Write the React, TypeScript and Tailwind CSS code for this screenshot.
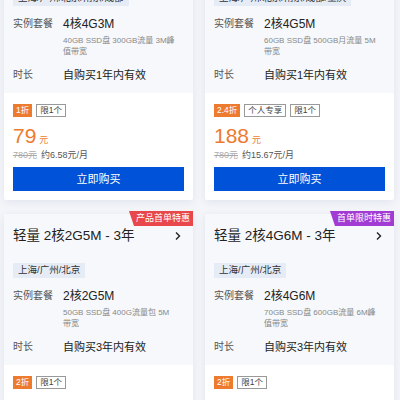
import React from 'react'

type Plan = {
  title: string
  ribbon?: { text: string; color: string }
  region: string
  spec: string
  detail: string
  duration: string
  badges: { text: string; hot?: boolean }[]
  price: string
  oldPrice: string
  monthly: string
}

const plans: Plan[] = [
  {
    title: '轻量 4核4G3M - 1年',
    region: '上海/广州/北京/南京/成都',
    spec: '4核4G3M',
    detail: '40GB SSD盘 300GB流量 3M峰值带宽',
    duration: '自购买1年内有效',
    badges: [{ text: '1折', hot: true }, { text: '限1个' }],
    price: '79',
    oldPrice: '780元',
    monthly: '约6.58元/月',
  },
  {
    title: '轻量 2核4G5M - 1年',
    region: '上海/广州/北京/南京/成都/重庆',
    spec: '2核4G5M',
    detail: '60GB SSD盘 500GB月流量 5M 带宽',
    duration: '自购买1年内有效',
    badges: [{ text: '2.4折', hot: true }, { text: '个人专享' }, { text: '限1个' }],
    price: '188',
    oldPrice: '780元',
    monthly: '约15.67元/月',
  },
  {
    title: '轻量 2核2G5M - 3年',
    ribbon: { text: '产品首单特惠', color: 'bg-[#e8474b]' },
    region: '上海/广州/北京',
    spec: '2核2G5M',
    detail: '50GB SSD盘 400G流量包 5M 带宽',
    duration: '自购买3年内有效',
    badges: [{ text: '2折', hot: true }, { text: '限1个' }],
    price: '198',
    oldPrice: '2160元',
    monthly: '约5.5元/月',
  },
  {
    title: '轻量 2核4G6M - 3年',
    ribbon: { text: '首单限时特惠', color: 'bg-[#a23bd4]' },
    region: '上海/广州/北京',
    spec: '2核4G6M',
    detail: '70GB SSD盘 600GB流量 6M峰值带宽',
    duration: '自购买3年内有效',
    badges: [{ text: '2折', hot: true }, { text: '限1个' }],
    price: '528',
    oldPrice: '2880元',
    monthly: '约14.67元/月',
  },
]

function Card({ plan }: { plan: Plan }) {
  return (
    <div className="relative flex flex-col rounded-[2px] bg-white shadow-[0_2px_8px_rgba(0,40,100,0.08)]">
      {plan.ribbon && (
        <div
          className={`absolute top-[-3px] right-0 h-[15px] pl-[7px] pr-[3px] flex items-center text-[9px] leading-none text-white ${plan.ribbon.color} [clip-path:polygon(0_0,100%_0,100%_100%,5px_100%)]`}
        >
          {plan.ribbon.text}
        </div>
      )}
      <div className="bg-[#f6f8fb] px-[9px] pt-[12px] pb-[10px]">
        <div className="flex items-center justify-between h-[20px]">
          <span className="text-[13.5px] text-[#222]">{plan.title}</span>
          <svg width="8" height="10" viewBox="0 0 8 10" className="mr-[2px]">
            <path d="M2 1.5 L5.5 5 L2 8.5" fill="none" stroke="#222" strokeWidth="1.4" />
          </svg>
        </div>
        <div className="mt-[17px] flex">
          <span className="h-[15px] px-[5px] flex items-center bg-[#e6ecf6] text-[9.5px] text-[#333] rounded-[1px]">
            {plan.region}
          </span>
        </div>
        <div className="mt-[10px] flex">
          <span className="w-[50px] shrink-0 text-[10px] leading-[16px] text-[#555]">实例套餐</span>
          <div className="flex-1 pr-[8px]">
            <div className="text-[12px] leading-[16px] text-[#222]">{plan.spec}</div>
            <div className="mt-[3px] text-[8px] leading-[11px] text-[#888]">{plan.detail}</div>
          </div>
        </div>
        <div className="mt-[10px] flex items-center">
          <span className="w-[50px] shrink-0 text-[10px] leading-[16px] text-[#555]">时长</span>
          <span className="text-[11px] leading-[16px] text-[#222]">{plan.duration}</span>
        </div>
      </div>
      <div className="px-[9px] pt-[11px] pb-[9px]">
        <div className="flex gap-[4px]">
          {plan.badges.map((b) =>
            b.hot ? (
              <span
                key={b.text}
                className="h-[13px] px-[3px] flex items-center bg-[#ed7b2f] text-white text-[8.5px]"
              >
                {b.text}
              </span>
            ) : (
              <span
                key={b.text}
                className="h-[13px] px-[3px] flex items-center border border-[#999] text-[#444] text-[8.5px]"
              >
                {b.text}
              </span>
            )
          )}
        </div>
        <div className="mt-[7px] flex items-baseline h-[24px] text-[#ed7b2f]">
          <span className="text-[21px] leading-[24px]">{plan.price}</span>
          <span className="ml-[3px] text-[9px]">元</span>
        </div>
        <div className="mt-[1px] flex items-center gap-[4px] text-[9px] leading-[12px]">
          <span className="line-through text-[#aaa]">{plan.oldPrice}</span>
          <span className="text-[#555]">{plan.monthly}</span>
        </div>
        <button className="mt-[6px] w-full h-[24px] bg-[#0052d9] text-white text-[11px]">立即购买</button>
      </div>
    </div>
  )
}

export default function App() {
  return (
    <div
      className="w-[400px] h-[400px] overflow-hidden bg-[#f3f5f9]"
      style={{ fontFamily: '"Liberation Sans", "Noto Sans CJK SC", sans-serif' }}
    >
      <div className="-mt-[58px] grid grid-cols-2 gap-x-[12px] gap-y-[14px] pl-[4px] pr-[6px]">
        {plans.map((p) => (
          <Card key={p.title} plan={p} />
        ))}
      </div>
    </div>
  )
}
